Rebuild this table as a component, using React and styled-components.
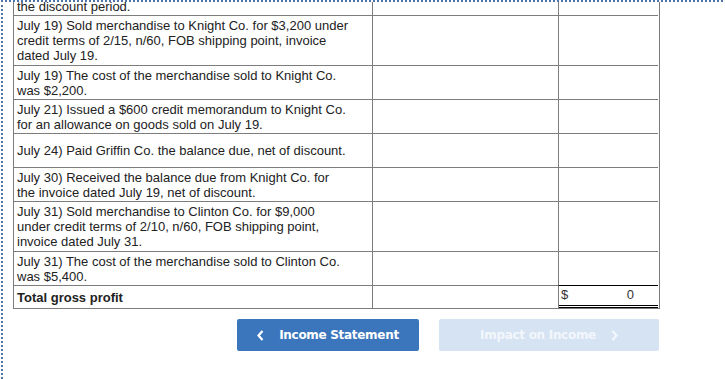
import React from 'react';
import styled, { createGlobalStyle } from 'styled-components';

const GlobalStyle = createGlobalStyle`
  html, body {
    margin: 0;
    padding: 0;
    background: #ffffff;
    overflow: hidden;
  }
`;

const Frame = styled.div`
  box-sizing: border-box;
  width: 722px;
  height: 100vh;
  margin-left: 1px;
  padding-left: 10px;
  border-top: 2px dotted #4f73a6;
  border-left: 2px dotted #4f73a6;
  overflow: hidden;
`;

const Sheet = styled.div`
  display: grid;
  grid-template-columns: 359px 186px 100px;
  grid-template-rows: ${(props) => props.rows.map((h) => `${h}px`).join(' ')};
  width: 646px;
  margin-top: -6px;
  border-right: 1px solid #7d7d7d;
  border-bottom: 1px solid #7d7d7d;
  font-family: 'Liberation Sans', Arial, sans-serif;
  font-size: 13px;
  line-height: 15px;
  color: #222;
`;

const Cell = styled.div`
  box-sizing: border-box;
  display: flex;
  align-items: center;
  padding: 0 3px;
  border-top: 1px solid #7d7d7d;
  border-left: 1px solid #7d7d7d;
  font-weight: ${(props) => (props.bold ? 700 : 400)};
  white-space: nowrap;
`;

const AmountCell = styled.div`
  box-sizing: border-box;
  display: flex;
  align-items: stretch;
  border-top: 1px solid #000;
  border-left: 1px solid #7d7d7d;
  .amount__inner {
    flex: 1;
    display: flex;
    align-items: center;
    justify-content: space-between;
    padding: 0 24px 2px 2px;
    border-bottom: 3px double #000;
    color: #333;
  }
`;

const ButtonRow = styled.div`
  display: flex;
  justify-content: flex-end;
  gap: 20px;
  width: 646px;
  margin-top: 10px;
`;

const NavButton = styled.button`
  box-sizing: border-box;
  display: flex;
  align-items: center;
  justify-content: center;
  gap: 15px;
  width: ${(props) => props.width}px;
  height: 32px;
  padding: 0;
  border: none;
  border-radius: 2px;
  background: ${(props) => (props.disabled ? '#d6e3f2' : '#3b76bd')};
  color: ${(props) => (props.disabled ? '#f3f7fc' : '#ffffff')};
  font-family: 'DejaVu Sans', Verdana, sans-serif;
  font-weight: 700;
  font-size: 12px;
  letter-spacing: -0.3px;
  cursor: ${(props) => (props.disabled ? 'default' : 'pointer')};
  svg {
    flex: none;
  }
`;

const Chevron = ({ dir }) => (
  <svg width="7" height="11" viewBox="0 0 7 11">
    <polyline
      points={dir === 'left' ? '5.5,1 1.5,5.5 5.5,10' : '1.5,1 5.5,5.5 1.5,10'}
      fill="none"
      stroke="currentColor"
      strokeWidth="2.2"
    />
  </svg>
);

const entries = [
  { lines: ['the discount period.'], height: 19 },
  {
    lines: [
      'July 19) Sold merchandise to Knight Co. for $3,200 under',
      'credit terms of 2/15, n/60, FOB shipping point, invoice',
      'dated July 19.',
    ],
    height: 50,
  },
  { lines: ['July 19) The cost of the merchandise sold to Knight Co.', 'was $2,200.'], height: 34 },
  {
    lines: ['July 21) Issued a $600 credit memorandum to Knight Co.', 'for an allowance on goods sold on July 19.'],
    height: 34,
  },
  { lines: ['July 24) Paid Griffin Co. the balance due, net of discount.'], height: 34 },
  {
    lines: ['July 30) Received the balance due from Knight Co. for', 'the invoice dated July 19, net of discount.'],
    height: 34,
  },
  {
    lines: [
      'July 31) Sold merchandise to Clinton Co. for $9,000',
      'under credit terms of 2/10, n/60, FOB shipping point,',
      'invoice dated July 31.',
    ],
    height: 50,
  },
  { lines: ['July 31) The cost of the merchandise sold to Clinton Co.', 'was $5,400.'], height: 34 },
];

function App() {
  const rows = [...entries.map((e) => e.height), 23];

  return (
    <>
      <GlobalStyle />
      <Frame>
        <Sheet rows={rows}>
          {entries.map((entry) => (
            <React.Fragment key={entry.lines[0]}>
              <Cell>
                <span>
                  {entry.lines.map((line, i) => (
                    <React.Fragment key={line}>
                      {i > 0 && <br />}
                      {line}
                    </React.Fragment>
                  ))}
                </span>
              </Cell>
              <Cell />
              <Cell />
            </React.Fragment>
          ))}
          <Cell bold>Total gross profit</Cell>
          <Cell />
          <AmountCell>
            <div className="amount__inner">
              <span>$</span>
              <span>0</span>
            </div>
          </AmountCell>
        </Sheet>
        <ButtonRow>
          <NavButton type="button" width={182}>
            <Chevron dir="left" />
            <span>Income Statement</span>
          </NavButton>
          <NavButton type="button" width={220} disabled>
            <span>Impact on Income</span>
            <Chevron dir="right" />
          </NavButton>
        </ButtonRow>
      </Frame>
    </>
  );
}

export default App;
